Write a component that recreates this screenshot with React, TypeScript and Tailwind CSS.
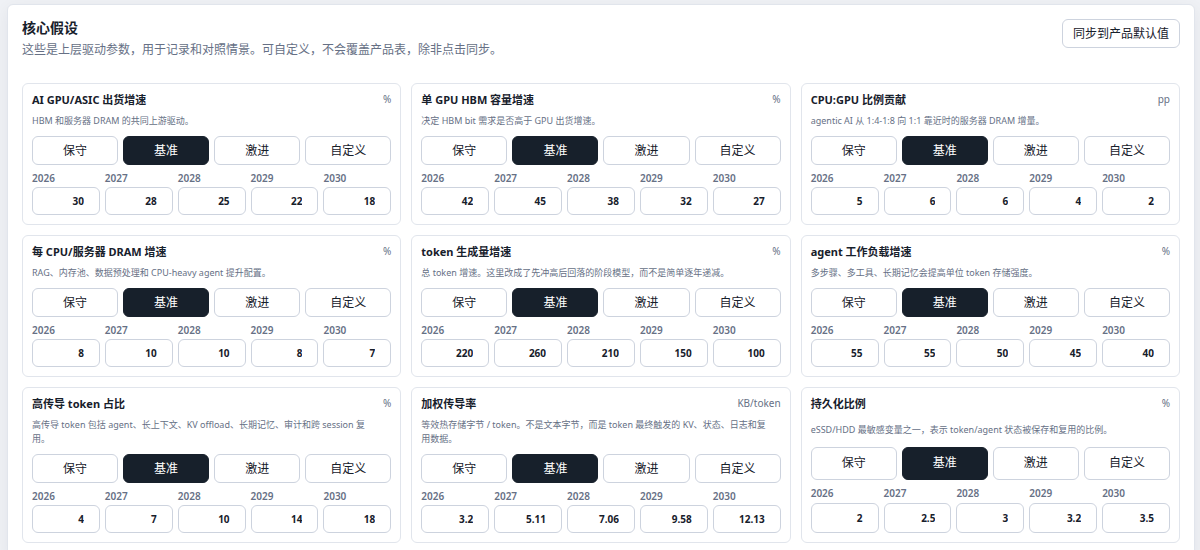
import React, { useState } from 'react';
import clsx from 'clsx';

type Scenario = '保守' | '基准' | '激进' | '自定义';

interface Assumption {
  id: string;
  title: string;
  unit: string;
  description: string;
  values: string[];
}

const YEARS = [2026, 2027, 2028, 2029, 2030];
const SCENARIOS: Scenario[] = ['保守', '基准', '激进', '自定义'];

const ASSUMPTIONS: Assumption[] = [
  {
    id: 'gpu-shipment',
    title: 'AI GPU/ASIC 出货增速',
    unit: '%',
    description: 'HBM 和服务器 DRAM 的共同上游驱动。',
    values: ['30', '28', '25', '22', '18'],
  },
  {
    id: 'hbm-capacity',
    title: '单 GPU HBM 容量增速',
    unit: '%',
    description: '决定 HBM bit 需求是否高于 GPU 出货增速。',
    values: ['42', '45', '38', '32', '27'],
  },
  {
    id: 'cpu-gpu-ratio',
    title: 'CPU:GPU 比例贡献',
    unit: 'pp',
    description: 'agentic AI 从 1:4-1:8 向 1:1 靠近时的服务器 DRAM 增量。',
    values: ['5', '6', '6', '4', '2'],
  },
  {
    id: 'server-dram',
    title: '每 CPU/服务器 DRAM 增速',
    unit: '%',
    description: 'RAG、内存池、数据预处理和 CPU-heavy agent 提升配置。',
    values: ['8', '10', '10', '8', '7'],
  },
  {
    id: 'token-volume',
    title: 'token 生成量增速',
    unit: '%',
    description: '总 token 增速。这里改成了先冲高后回落的阶段模型，而不是简单逐年递减。',
    values: ['220', '260', '210', '150', '100'],
  },
  {
    id: 'agent-workload',
    title: 'agent 工作负载增速',
    unit: '%',
    description: '多步骤、多工具、长期记忆会提高单位 token 存储强度。',
    values: ['55', '55', '50', '45', '40'],
  },
  {
    id: 'high-conduction',
    title: '高传导 token 占比',
    unit: '%',
    description: '高传导 token 包括 agent、长上下文、KV offload、长期记忆、审计和跨 session 复用。',
    values: ['4', '7', '10', '14', '18'],
  },
  {
    id: 'weighted-rate',
    title: '加权传导率',
    unit: 'KB/token',
    description: '等效热存储字节 / token。不是文本字节，而是 token 最终触发的 KV、状态、日志和复用数据。',
    values: ['3.2', '5.11', '7.06', '9.58', '12.13'],
  },
  {
    id: 'persistence',
    title: '持久化比例',
    unit: '%',
    description: 'eSSD/HDD 最敏感变量之一，表示 token/agent 状态被保存和复用的比例。',
    values: ['2', '2.5', '3', '3.2', '3.5'],
  },
];

const AssumptionCard: React.FC<{ item: Assumption }> = ({ item }) => {
  const [scenario, setScenario] = useState<Scenario>('基准');
  const [values, setValues] = useState(item.values);

  const handleChange = (index: number, value: string) => {
    setValues(values.map((v, i) => (i === index ? value : v)));
    setScenario('自定义');
  };

  return (
    <article className="grid gap-[7px] rounded-md border border-[#e1e5ec] bg-white p-[9px]">
      <div className="flex items-start justify-between gap-2">
        <h3 className="text-[11px] leading-[14px] font-bold text-[#17202b]">{item.title}</h3>
        <span className="text-[10px] leading-3 text-[#667085]">{item.unit}</span>
      </div>

      <p className="self-center pr-3 pb-px text-[9px] leading-[14px] text-[#667085]">{item.description}</p>

      <div className="grid grid-cols-4 gap-[5px]">
        {SCENARIOS.map((name) => (
          <button
            key={name}
            type="button"
            aria-pressed={scenario === name}
            onClick={() => setScenario(name)}
            className={clsx(
              'min-h-[29px] rounded-md border text-[12px] leading-4',
              scenario === name
                ? 'border-[#17202b] bg-[#17202b] text-white'
                : 'border-[#cdd3de] bg-white text-[#17202b]'
            )}
          >
            {name}
          </button>
        ))}
      </div>

      <div className="grid grid-cols-5 gap-[5px]">
        {YEARS.map((year, i) => (
          <label key={year} className="grid gap-[3px] text-[10px] leading-3 font-semibold text-[#667085]">
            {year}
            <input
              type="number"
              name={`${item.id}-${year}`}
              value={values[i]}
              onChange={(e) => handleChange(i, e.target.value)}
              className="min-h-7 w-full min-w-0 rounded-md border border-[#cdd3de] bg-white pr-[15px] pl-1 text-right text-[10px] font-bold text-[#17202b] [appearance:textfield] [&::-webkit-inner-spin-button]:appearance-none"
            />
          </label>
        ))}
      </div>
    </article>
  );
};

const App: React.FC = () => {
  return (
    <main className="min-h-screen bg-[#eff1f5] pt-1 pr-[5px] pl-[7px] font-['Noto_Sans','Noto_Sans_CJK_SC',sans-serif] text-[#17202b]">
      <section className="rounded-md border border-[#e1e5ec] bg-white p-[14px] shadow-[0_4px_16px_rgba(23,32,43,0.06)]">
        <header className="mb-6 flex items-start justify-between gap-4">
          <div>
            <h2 className="mb-1 text-[14px] leading-[18px] font-bold">核心假设</h2>
            <p className="text-[12px] leading-[18px] text-[#667085]">
              这些是上层驱动参数，用于记录和对照情景。可自定义，不会覆盖产品表，除非点击同步。
            </p>
          </div>
          <button
            type="button"
            className="min-h-[29px] shrink-0 rounded-md border border-[#cdd3de] bg-white px-[10px] text-[12px] leading-4"
          >
            同步到产品默认值
          </button>
        </header>

        <div className="grid grid-cols-3 gap-[10px]">
          {ASSUMPTIONS.map((item) => (
            <AssumptionCard key={item.id} item={item} />
          ))}
        </div>
      </section>
    </main>
  );
};

export default App;
